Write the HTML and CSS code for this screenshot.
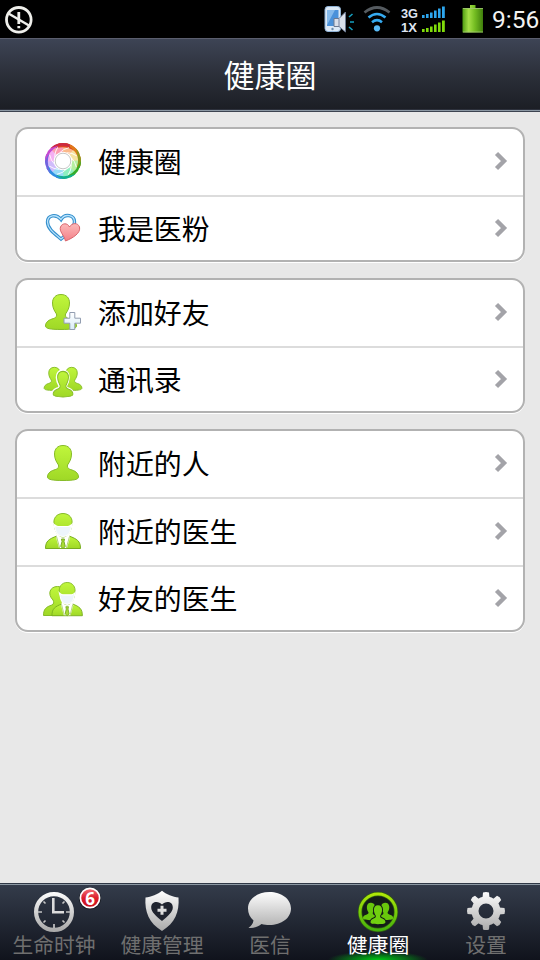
FILE: index.html
```html
<!DOCTYPE html>
<html lang="zh-CN">
<head>
<meta charset="utf-8">
<title>健康圈</title>
<link rel="stylesheet" href="styles.css">
</head>
<body>
<svg class="defs" width="0" height="0">
  <defs>
    <linearGradient id="lime" x1="0" y1="0" x2="0" y2="1"><stop offset="0" stop-color="#c0f63c"/><stop offset="1" stop-color="#9fd826"/></linearGradient>
    <linearGradient id="pink" x1="0" y1="0" x2="0" y2="1"><stop offset="0" stop-color="#fcb9b9"/><stop offset="1" stop-color="#f38088"/></linearGradient>
    <linearGradient id="silver" gradientUnits="userSpaceOnUse" x1="0" y1="891" x2="0" y2="931"><stop offset="0" stop-color="#ffffff"/><stop offset="1" stop-color="#a9a9a9"/></linearGradient>
    <linearGradient id="neon" gradientUnits="userSpaceOnUse" x1="0" y1="892" x2="0" y2="932"><stop offset="0" stop-color="#b4ea08"/><stop offset="1" stop-color="#3fae0c"/></linearGradient>
    <linearGradient id="red" x1="0" y1="0" x2="0" y2="1"><stop offset="0" stop-color="#f4737a"/><stop offset=".5" stop-color="#dc1f2b"/><stop offset="1" stop-color="#c80e1c"/></linearGradient>
    <linearGradient id="cell" x1="0" y1="0" x2="1" y2="0"><stop offset="0" stop-color="#4f9d12"/><stop offset=".3" stop-color="#a5e047"/><stop offset=".6" stop-color="#74bd22"/><stop offset="1" stop-color="#3f7f0c"/></linearGradient>
    <linearGradient id="plus" x1="0" y1="0" x2="0" y2="1"><stop offset="0" stop-color="#ffffff"/><stop offset="1" stop-color="#d8ecf8"/></linearGradient>
    <path id="bust" d="M16 .5C10.500 .5 7.500 4 7.500 9C7.500 14 9.500 17 11.500 20C12 23 10.500 24 7 25C2.500 26.500 .5 29 .5 32C.5 34.500 5 35.500 16 35.500S31.500 34.500 31.500 32C31.500 29 29.500 26.500 25 25C21.500 24 20 23 20.500 20C22.500 17 24.500 14 24.500 9C24.500 4 21.500 .5 16 .5Z"/>
    <g id="doctor">
      <path d="M.5 35.500C.5 28 4 26 12 23L18 28L24 23C32 26 35.500 28 35.500 35.500Z" fill="url(#lime)" stroke="#78ad20"/>
      <path d="M12 21H24L25 24.500L22 35H14L11 24.500Z" fill="#fff"/>
      <path d="M11.500 23.500L14.800 35.500M24.500 23.500L21.200 35.500" stroke="#8fbe3a" stroke-width=".7" fill="none"/>
      <path d="M16.500 26H19.500L19 28.500L20.300 33.500L18 35.500L15.700 33.500L17 28.500Z" fill="#a8dc35" stroke="#70a51b" stroke-width=".9"/>
      <path d="M9.300 12C7.500 5 12 .5 18 .5S28.500 5 26.700 12C26 19 22 24 18 24S10 19 9.300 12Z" fill="url(#lime)" stroke="#86bb28"/>
      <path d="M9 11.500Q11 13.500 13 13.500H23Q25 13.500 27 11.500L26 15.500C25 21 22 23.500 18 23.500S11 21 10 15.500Z" fill="#edf5fb" stroke="#fff" stroke-width="1.200"/>
    </g>
  </defs>
</svg>
<div class="screen">
  <div class="status">
    <svg width="40" height="38" viewBox="0 0 40 38" fill="none" stroke="#efefeb">
      <circle cx="18.800" cy="19.800" r="12.300" stroke-width="2.800"/>
      <path d="M8.500 13.500L29 25.500" stroke-width="2.500"/>
      <path d="M18.800 12V24M18.800 26V28.300" stroke-width="2.800"/>
    </svg>
    <svg class="signals" width="170" height="38" viewBox="320 0 170 38">
      <rect x="325" y="6.500" width="15.500" height="25" rx="3" fill="#dce9f7" stroke="#8fb2d6"/>
      <rect x="327" y="10" width="11.500" height="16" fill="#4a91da"/>
      <path d="M327 25V10H335Z" fill="#84b9eb"/>
      <circle cx="332.500" cy="29" r="1.200" fill="#6a8bad"/>
      <path d="M334 18.500H339L345.500 12V32L339 26.500H334Z" fill="#d9dfea" stroke="#6d7a92"/>
      <path d="M339 18.500V26.500" stroke="#7582a0"/>
      <path d="M349 17L352.500 14M350 22H354M349 27L352.500 30" stroke="#159fbf" stroke-width="1.600"/>
      <path d="M364.500 12.500Q377 2.500 389.500 12.500" fill="none" stroke="#555b60" stroke-width="2.700"/>
      <path d="M368.500 17.500Q377 10.500 385.500 17.500M372 22.200Q377 18.200 382 22.200" fill="none" stroke="#35aaf0" stroke-width="2.600"/>
      <circle cx="377" cy="28.300" r="3.100" fill="#58b9f5"/>
      <text class="net" x="401" y="18" textLength="17" lengthAdjust="spacingAndGlyphs">3G</text>
      <text class="net" x="401" y="32" textLength="16" lengthAdjust="spacingAndGlyphs">1X</text>
      <path d="M422 15h2.600v3h-2.600zM426 14h2.600v4h-2.600zM430 12.500h2.600v5.500h-2.600zM434 10.500h2.600v7.500h-2.600zM438 8.500h2.600v9.500h-2.600zM442 6.500h2.800v11.500h-2.800z" fill="#2da6ee"/>
      <path d="M422 29h2.600v3h-2.600zM426 28h2.600v4h-2.600zM430 26.500h2.600v5.500h-2.600zM434 24.500h2.600v7.500h-2.600zM438 22.500h2.600v9.500h-2.600zM442 20.500h2.800v11.500h-2.800z" fill="#80dc0a"/>
      <path d="M470 5H475.500V8H483V32.500H462.500V8H470Z" fill="url(#cell)"/>
      <path d="M463 8.500H483M463 32H483" stroke="#a3c777" stroke-width=".8"/>
    </svg>
    <span class="time">9:56</span>
  </div>
  <header class="title">健康圈</header>
  <main class="content">
    <section class="card">
      <div class="row">
        <svg class="icon" viewBox="0 0 40 66">
          <g transform="translate(20 32)">
            <g fill="none" stroke-width="8">
              <path d="M0-12A12 12 0 0 1 8.490-8.490" stroke="#fbb98a"/>
              <path d="M8.300-8.670A12 12 0 0 1 12 0" stroke="#f5e3a0"/>
              <path d="M12-.3A12 12 0 0 1 8.490 8.490" stroke="#b5efa0"/>
              <path d="M8.670 8.300A12 12 0 0 1 0 12" stroke="#8df0c0"/>
              <path d="M.3 12A12 12 0 0 1-8.490 8.490" stroke="#98dcf8"/>
              <path d="M-8.300 8.670A12 12 0 0 1-12 0" stroke="#d0bcfb"/>
              <path d="M-12 .3A12 12 0 0 1-8.490-8.490" stroke="#f5b0f2"/>
              <path d="M-8.670-8.300A12 12 0 0 1 0-12" stroke="#fb9cb0"/>
            </g>
            <path id="blade" d="M-7-16.600A18 18 0 0 1 12.700-12.700L13 -9Q5-15.500-7-13Z" fill="#dd4322"/>
            <use href="#rim" transform="rotate(45)" fill="#e08a1c"/>
            <g id="rims">
              <path id="rim" d="M0-18A18 18 0 0 1 16.600-7L14.500-5Q11-13 0-18Z" fill="#e07a18"/>
              <path d="M0-18A18 18 0 0 1 16.600-7L14.500-5Q11-13 0-18Z" transform="rotate(45)" fill="#8b9a20"/>
              <path d="M0-18A18 18 0 0 1 16.600-7L14.500-5Q11-13 0-18Z" transform="rotate(90)" fill="#35ad28"/>
              <path d="M0-18A18 18 0 0 1 16.600-7L14.500-5Q11-13 0-18Z" transform="rotate(135)" fill="#12b08e"/>
              <path d="M0-18A18 18 0 0 1 16.600-7L14.500-5Q11-13 0-18Z" transform="rotate(180)" fill="#2d8fe2"/>
              <path d="M0-18A18 18 0 0 1 16.600-7L14.500-5Q11-13 0-18Z" transform="rotate(225)" fill="#7263df"/>
              <path d="M0-18A18 18 0 0 1 16.600-7L14.500-5Q11-13 0-18Z" transform="rotate(270)" fill="#c548d0"/>
              <path d="M0-18A18 18 0 0 1 16.600-7L14.500-5Q11-13 0-18Z" transform="rotate(315)" fill="#cc2940"/>
            </g>
            <g fill="none" stroke="#fff" stroke-opacity=".85" stroke-width="1">
              <path id="edge" d="M-3-8.500Q0-12 6-13.300"/>
              <use href="#edge" transform="rotate(45)"/><use href="#edge" transform="rotate(90)"/><use href="#edge" transform="rotate(135)"/>
              <use href="#edge" transform="rotate(180)"/><use href="#edge" transform="rotate(225)"/><use href="#edge" transform="rotate(270)"/><use href="#edge" transform="rotate(315)"/>
            </g>
            <circle r="9.300" fill="#fff"/><circle r="7.800" fill="#fff" stroke="#c0c0c0" stroke-width=".9"/>
          </g>
        </svg>
        <span class="label">健康圈</span>
        <svg class="chevron" viewBox="0 0 14 20"><path d="M2.500 2.500L10 10L2.500 17.500"/></svg>
      </div>
      <div class="row short">
        <svg class="icon" viewBox="0 0 40 63">
          <path d="M18 42C12 37 4.500 32 4.500 25C4.500 18 13 16.500 18 22.500C22 16 31.500 18 31.500 25C31.500 32 24 37 18 42Z" fill="none" stroke="#348fcd" stroke-width="3.400"/>
          <path d="M18 42C12 37 4.500 32 4.500 25C4.500 18 13 16.500 18 22.500C22 16 31.500 18 31.500 25C31.500 32 24 37 18 42Z" fill="none" stroke="#b9e3fb" stroke-width="1.300"/>
          <path d="M22.500 44C21 38 16 34.500 17.500 30C19 26 24.500 25.500 26.500 30C29 25.500 35 25.500 36.500 30C38 36 30 41 22.500 44Z" fill="url(#pink)" stroke="#d9656c"/>
        </svg>
        <span class="label">我是医粉</span>
        <svg class="chevron" viewBox="0 0 14 20"><path d="M2.500 2.500L10 10L2.500 17.500"/></svg>
      </div>
    </section>
    <section class="card">
      <div class="row">
        <svg class="icon" viewBox="0 0 40 66">
          <use href="#bust" x="2" y="14" fill="url(#lime)" stroke="#86bb28"/>
          <path d="M26.800 32.500H31.800V38.200H37.500V43.200H31.800V49.500H26.800V43.200H21V38.200H26.800Z" fill="url(#plus)" stroke="#929db0" stroke-width="1" stroke-linejoin="round"/>
        </svg>
        <span class="label">添加好友</span>
        <svg class="chevron" viewBox="0 0 14 20"><path d="M2.500 2.500L10 10L2.500 17.500"/></svg>
      </div>
      <div class="row short">
        <svg class="icon" viewBox="0 0 40 63">
          <g fill="url(#lime)" stroke="#86bb28">
            <use href="#bust" transform="translate(.8 19) scale(.66)" stroke-width="1.400"/>
            <use href="#bust" transform="translate(18.100 19) scale(.66)" stroke-width="1.400"/>
          </g>
          <use href="#bust" transform="translate(9.500 23) scale(.64 .73)" fill="#fff" stroke="#fff" stroke-width="5"/>
          <use href="#bust" transform="translate(9.800 23) scale(.64 .73)" fill="url(#lime)" stroke="#86bb28" stroke-width="1.400"/>
        </svg>
        <span class="label">通讯录</span>
        <svg class="chevron" viewBox="0 0 14 20"><path d="M2.500 2.500L10 10L2.500 17.500"/></svg>
      </div>
    </section>
    <section class="card">
      <div class="row">
        <svg class="icon" viewBox="0 0 40 66"><use href="#bust" x="4" y="14" fill="url(#lime)" stroke="#86bb28"/></svg>
        <span class="label">附近的人</span>
        <svg class="chevron" viewBox="0 0 14 20"><path d="M2.500 2.500L10 10L2.500 17.500"/></svg>
      </div>
      <div class="row">
        <svg class="icon" viewBox="0 0 40 66"><use href="#doctor" x="2" y="14"/></svg>
        <span class="label">附近的医生</span>
        <svg class="chevron" viewBox="0 0 14 20"><path d="M2.500 2.500L10 10L2.500 17.500"/></svg>
      </div>
      <div class="row short">
        <svg class="icon" viewBox="0 0 40 63">
          <path d="M.5 48.500C.5 42 3 40 9 38C11 37 11 35 10 33C4 27 7 19.500 14.500 19.500C20 19.500 22 24 21 30L24 48.500Z" fill="url(#lime)" stroke="#86bb28"/>
          <use href="#doctor" transform="translate(8.500 15) scale(.87 .95)"/>
        </svg>
        <span class="label">好友的医生</span>
        <svg class="chevron" viewBox="0 0 14 20"><path d="M2.500 2.500L10 10L2.500 17.500"/></svg>
      </div>
    </section>
  </main>
  <nav class="tabs">
    <div class="tab">
      <svg width="108" height="48" viewBox="0 885 108 48">
        <circle cx="54" cy="912" r="17.900" fill="none" stroke="url(#silver)" stroke-width="4.200"/>
        <path d="M53.300 898V912.300H64" fill="none" stroke="#dcdcdc" stroke-width="2.600"/>
        <path d="M54 924V928M38 912H42M66 912H70M43.500 901.500L45.500 903.500M64.500 901.500L62.500 903.500M43.500 922.500L45.500 920.500M64.500 922.500L62.500 920.500" stroke="#c4c4c4" stroke-width="1.700"/>
        <circle cx="90" cy="898.500" r="11" fill="#000" opacity=".45"/>
        <circle cx="90" cy="898" r="9.600" fill="url(#red)" stroke="#fff" stroke-width="1.700"/>
        <text class="badge" x="90" y="904.500">6</text>
      </svg>
      <span>生命时钟</span>
    </div>
    <div class="tab">
      <svg width="108" height="48" viewBox="0 885 108 48">
        <path d="M54 890.800C50 894.500 43 897 37.500 897.500C36.500 912 41 923 54 931C67 923 71.500 912 70.500 897.500C65 897 58 894.500 54 890.800Z" fill="url(#silver)"/>
        <path d="M54 921C48 916 43.200 912 43.200 907.500C43.200 901 50.500 900.500 54 904.500C57.500 900.500 64.800 901 64.800 907.500C64.800 912 60 916 54 921Z" fill="#20242f"/>
        <path d="M54 905.800V914.800M49.500 910.300H58.500" stroke="#dedede" stroke-width="3"/>
      </svg>
      <span>健康管理</span>
    </div>
    <div class="tab">
      <svg width="108" height="48" viewBox="0 885 108 48">
        <path d="M53.500 892C65.500 892 75 899 75 908.500S65.500 925 53.500 925C50.500 925 48 924.600 45.500 924C42 927 37 928.500 32.500 927.800C35.500 926 37 923.500 37.500 920.500C34 917.500 32 913.500 32 908.500C32 899 41.500 892 53.500 892Z" fill="url(#silver)"/>
      </svg>
      <span>医信</span>
    </div>
    <div class="tab active">
      <svg width="108" height="48" viewBox="0 885 108 48">
        <circle cx="54" cy="912" r="18" fill="#141d18" stroke="#315d13" stroke-width="4.300"/>
        <circle cx="54" cy="912" r="18" fill="none" stroke="url(#neon)" stroke-width="2.900"/>
        <g fill="#68c80c">
          <use href="#bust" transform="translate(39.500 902) rotate(3) scale(.48 .5)"/>
          <use href="#bust" transform="translate(53.300 902.800) rotate(-3) scale(.48 .5)"/>
        </g>
        <use href="#bust" transform="translate(46.300 905) scale(.48 .54)" fill="#71d010" stroke="#141d18" stroke-width="4" paint-order="stroke"/>
      </svg>
      <span>健康圈</span>
    </div>
    <div class="tab">
      <svg width="108" height="48" viewBox="0 885 108 48">
        <g fill="none" stroke="url(#silver)">
          <circle cx="54" cy="911" r="11" stroke-width="7"/>
        </g>
        <g fill="url(#silver)">
          <path d="M50.500 898L51 892.500Q54 891.500 57 892.500L57.500 898ZM50.500 924L51 929.500Q54 930.500 57 929.500L57.500 924ZM41 907.500L35.500 908Q34.500 911 35.500 914L41 914.500ZM67 907.500L72.500 908Q73.500 911 72.500 914L67 914.500Z"/>
          <path d="M42.300 904.200L38.800 900Q39.800 896.800 43 895.800L47.200 899.300ZM65.700 904.200L69.200 900Q68.200 896.800 65 895.800L60.800 899.300ZM42.300 917.800L38.800 922Q39.800 925.200 43 926.200L47.200 922.700ZM65.700 917.800L69.200 922Q68.200 925.200 65 926.200L60.800 922.700Z"/>
        </g>
      </svg>
      <span>设置</span>
    </div>
  </nav>
</div>
</body>
</html>
```
FILE: styles.css
```css
* { box-sizing: border-box; }
body {
  margin: 0;
  font-family: "Noto Sans CJK SC", sans-serif;
}
.defs { display: block; }
.screen {
  display: flex;
  flex-direction: column;
  width: 540px;
  height: 960px;
  background: #e8e8e8;
  overflow: hidden;
}
.status {
  display: flex;
  height: 38px;
  background: #000;
}
.signals { margin-left: 280px; }
.net {
  font: bold 13px "Liberation Sans", sans-serif;
  fill: #dfe5f2;
}
.time {
  padding-left: 2px;
  font: 24.5px/40px Roboto, sans-serif;
  color: #f2f2f2;
}
.title {
  height: 74px;
  border-top: 1px solid #5b5e6e;
  border-bottom: 1px solid #3c4350;
  box-shadow: inset 0 -1px #8b97a3, inset 0 -2px #2c303b;
  background: linear-gradient(#3d4455, #2b2f39 50%, #1b1d24);
  color: #fff;
  font-size: 31px;
  line-height: 70px;
  text-align: center;
}
.content {
  flex: 1;
  display: flex;
  flex-direction: column;
  gap: 16px;
  padding: 15px 15px 0;
}
.card {
  border: 2px solid #b2b2b2;
  border-radius: 13px;
  background: #fff;
  box-shadow: 0 1px #fff;
}
.row {
  display: flex;
  align-items: center;
  height: 66px;
  padding: 0 15px 0 26px;
}
.row + .row {
  height: 68px;
  border-top: 2px solid #dcdcdc;
}
.row + .short { height: 65px; }
.icon {
  width: 40px;
  height: 100%;
}
.label {
  flex: 1;
  padding: 0 0 2px 15px;
  color: #000;
  font-size: 27.9px;
  line-height: 40px;
}
.chevron {
  width: 14px;
  height: 20px;
  margin-bottom: 2px;
  fill: none;
  stroke: #a3a3a8;
  stroke-width: 4.4;
}
.short .chevron { margin-bottom: 1px; }
.tabs {
  display: flex;
  height: 77px;
  border-top: 1px solid #303846;
  box-shadow: inset 0 1px #8c98a3;
  background: linear-gradient(#343c4b, #10131c);
}
.tab {
  display: flex;
  flex-direction: column;
  align-items: center;
  width: 108px;
  padding-top: 1px;
  color: #6f6f6f;
  font-size: 20.8px;
  line-height: 22px;
}
.active {
  color: #fff;
  background: radial-gradient(ellipse 50px 9px at 50% 100%, #00c814, rgba(0, 170, 20, .65) 50%, transparent);
}
.badge {
  font: bold 17px "Open Sans", sans-serif;
  fill: #fff;
  text-anchor: middle;
}
```
